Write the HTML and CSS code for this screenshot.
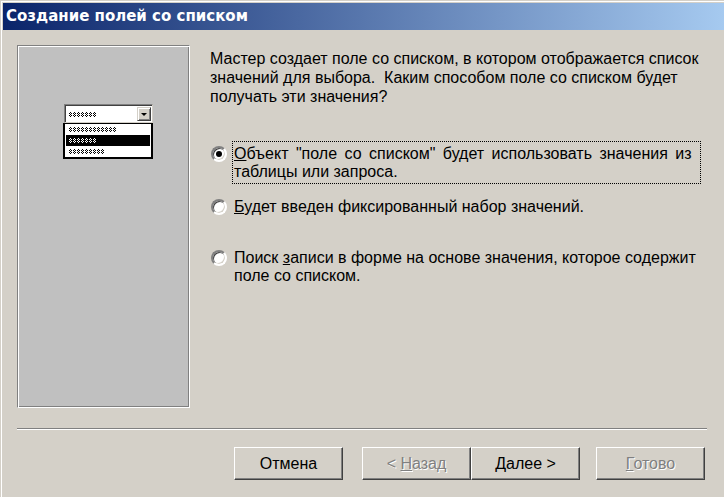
FILE: index.html
```html
<!DOCTYPE html>
<html lang="ru">
<head>
    <meta charset="UTF-8">
    <meta name="viewport" content="width=device-width, initial-scale=1.0">
    <title>Создание полей со списком</title>
    <link rel="stylesheet" href="styles.css">
</head>
<body>

<div class="window">
    <div class="titlebar">Создание полей со списком</div>
    <div class="client">
        <div class="main">
            <!-- картинка мастера слева -->
            <div class="preview">
                <div class="combo">
                    <div class="combo-field">
                        <span class="ph ph-8"></span>
                        <span class="combo-btn"><span class="arrow"></span></span>
                    </div>
                    <ul class="combo-list">
                        <li><span class="ph ph-13"></span></li>
                        <li class="selected"><span class="ph ph-8"></span></li>
                        <li><span class="ph ph-10"></span></li>
                    </ul>
                </div>
            </div>

            <div class="content">
                <p class="intro">Мастер создает поле со списком, в котором отображается список<br>значений для выбора.&nbsp; Каким способом поле со списком будет<br>получать эти значения?</p>

                <div class="options">
                    <label class="option first">
                        <span class="radio checked"></span>
                        <span class="label focus"><span class="wide"><u>О</u>бъект "поле со списком" будет использовать значения из</span><br>таблицы или запроса.</span>
                    </label>
                    <label class="option second">
                        <span class="radio"></span>
                        <span class="label"><u>Б</u>удет введен фиксированный набор значений.</span>
                    </label>
                    <label class="option third">
                        <span class="radio"></span>
                        <span class="label">Поиск <u>з</u>аписи в форме на основе значения, которое содержит<br>поле со списком.</span>
                    </label>
                </div>
            </div>
        </div>

        <div class="separator"></div>

        <div class="buttons">
            <button class="btn cancel">Отмена</button>
            <button class="btn" disabled>&lt; <u>Н</u>азад</button>
            <button class="btn next"><u>Д</u>алее &gt;</button>
            <button class="btn" disabled><u>Г</u>отово</button>
        </div>
    </div>
</div>

</body>
</html>
```

FILE: styles.css
```css
* {
    box-sizing: border-box;
}
body {
    margin: 0;
    padding: 0;
    background-color: #d4d0c8;
    font-family: 'Liberation Sans', Arial, sans-serif;
    font-size: 16px;
    color: #000;
    overflow: hidden;
}
.window {
    width: 728px;
    height: 520px;
    border: 1px solid;
    border-color: #d4d0c8 #404040 #404040 #d4d0c8;
    padding: 2px;
    box-shadow: inset 1px 1px #fff, inset -1px -1px #808080;
}
.titlebar {
    height: 27px;
    line-height: 27px;
    padding-left: 3px;
    color: #fff;
    font-family: 'DejaVu Sans', Verdana, sans-serif;
    font-weight: bold;
    font-size: 15px;
    background: linear-gradient(to right, #0a246a, #a6caf0);
}
.client {
    padding: 15px 14px 0;
}
.main {
    display: flex;
    gap: 20px;
    height: 363px;
}

/* левая картинка */
.preview {
    width: 173px;
    height: 363px;
    background-color: #c0c0c0;
    border: 1px solid;
    border-color: #808080 #fff #fff #808080;
    box-shadow: inset 1px 1px #fff, inset -1px -1px #808080;
    padding: 58px 0 0 45px;
}
.combo {
    width: 90px;
}
.combo-field {
    width: 89px;
    height: 19px;
    margin-left: 1px;
    background-color: #fff;
    border: 1px solid;
    border-color: #808080 #d4d0c8 #d4d0c8 #808080;
    box-shadow: inset 1px 1px #404040;
    display: flex;
    align-items: center;
    justify-content: space-between;
    padding: 2px 1px 1px 4px;
}
.combo-btn {
    width: 14px;
    height: 14px;
    background-color: #d4d0c8;
    border: 1px solid;
    border-color: #d4d0c8 #404040 #404040 #d4d0c8;
    box-shadow: inset 1px 1px #fff, inset -1px -1px #808080;
    display: flex;
    align-items: center;
    justify-content: center;
}
.arrow {
    width: 0;
    height: 0;
    border-left: 3px solid transparent;
    border-right: 3px solid transparent;
    border-top: 3px solid #000;
}
.combo-list {
    list-style: none;
    margin: 0;
    padding: 0 1px;
    width: 90px;
    height: 36px;
    background-color: #fff;
    border: 2px solid #000;
    border-top-width: 1px;
}
.combo-list li {
    height: 11px;
    padding: 3px 0 0 3px;
    color: #000;
}
.combo-list li.selected {
    background-color: #000;
    color: #fff;
}
/* "xxxx" - условный текст на картинке */
.ph {
    display: block;
    height: 5px;
    background: repeating-conic-gradient(currentColor 0 25%, transparent 0 50%) 0 0 / 2px 2px;
    -webkit-mask-image: repeating-linear-gradient(90deg, #000 0 3px, transparent 3px 4px);
    mask-image: repeating-linear-gradient(90deg, #000 0 3px, transparent 3px 4px);
}
.ph-8 { width: 28px; }
.ph-10 { width: 36px; }
.ph-13 { width: 48px; }

/* текст справа */
.content {
    width: 500px;
}
.intro {
    margin: 4px 0 0;
    line-height: 19px;
}
.options {
    margin-top: 35px;
}
.option {
    display: flex;
    align-items: flex-start;
    line-height: 18px;
}
.option.second {
    margin-top: 10px;
}
.option.third {
    margin-top: 26px;
}
.radio {
    flex: none;
    width: 16px;
    height: 16px;
    margin: 5px 5px 0 1px;
    border-radius: 50%;
    background-color: #fff;
    border: 2px solid;
    border-color: #808080 #fff #fff #808080;
    box-shadow: inset 1px 1px #404040, inset -1px -1px #d4d0c8;
    position: relative;
}
.radio.checked::after {
    content: "";
    position: absolute;
    left: 4px;
    top: 4px;
    width: 4px;
    height: 4px;
    border-radius: 50%;
    background-color: #000;
    box-shadow: 0 0 0 1px #000;
}
.label {
    display: block;
    width: 469px;
    padding: 3px 2px 2px 1px;
    border: 1px solid transparent;
}
.label.focus {
    border: 1px dotted #000;
}
.wide {
    word-spacing: 3px;
}

.separator {
    width: 690px;
    height: 2px;
    margin-top: 20px;
    border-top: 1px solid #808080;
    border-bottom: 1px solid #fff;
}

/* кнопки */
.buttons {
    width: 688px;
    margin-top: 17px;
    display: flex;
    justify-content: flex-end;
}
.btn {
    width: 109px;
    height: 33px;
    padding: 0;
    font-family: inherit;
    font-size: 16px;
    color: #000;
    background-color: #d4d0c8;
    border: 1px solid;
    border-color: #fff #404040 #404040 #fff;
    box-shadow: inset -1px -1px #808080, inset 1px 1px #d4d0c8;
    border-radius: 0;
}
.btn:disabled {
    color: #808080;
    text-shadow: 1px 1px #fff;
}
.btn.cancel {
    margin-right: 19px;
}
.btn.next {
    margin-right: 16px;
}
```
